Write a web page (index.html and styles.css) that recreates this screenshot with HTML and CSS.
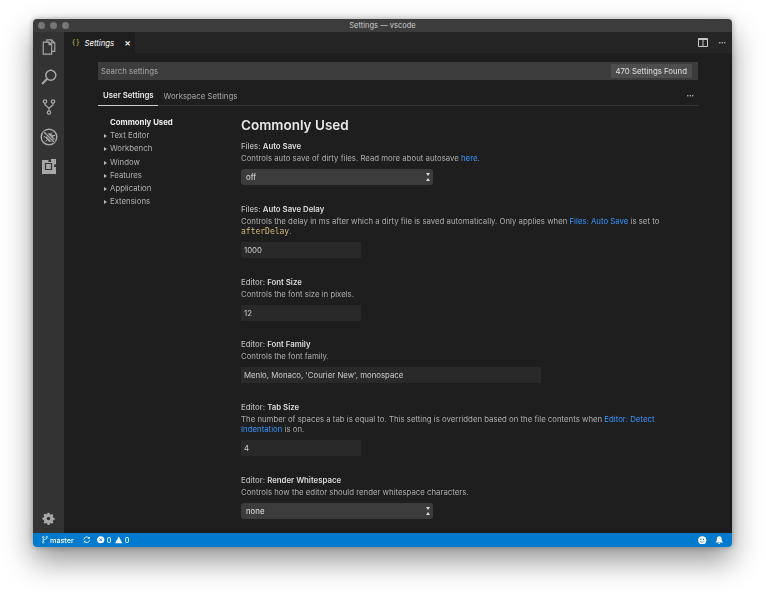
FILE: index.html
```html
<!DOCTYPE html>
<html lang="en">
<head>
    <meta charset="UTF-8" />
    <title>Settings — vscode</title>
    <link rel="stylesheet" href="styles.css">
</head>
<body>
<div class="window">
    <div class="titlebar">
        <div class="lights"><span></span><span></span><span></span></div>
        <div class="title">Settings — vscode</div>
    </div>
    <div class="workbench">
        <nav class="activity">
            <svg class="act" viewBox="0 0 16 18"><path d="M5.500 3.500V1h5.500l3.500 3.500V14h-3.500M1.500 3.500H8l3 3V17H1.500zM8 3.500v3h3M11 1v3.500h3.500" fill="none" stroke="#a8a8a8" stroke-width="1.300"/></svg>
            <svg class="act" viewBox="0 0 16 16"><circle cx="9.800" cy="6.200" r="5" fill="none" stroke="#a8a8a8" stroke-width="1.500"/><path d="M6.200 9.800L1 15" stroke="#a8a8a8" stroke-width="2"/></svg>
            <svg class="act" viewBox="0 0 16 18"><g fill="none" stroke="#a8a8a8" stroke-width="1.400"><circle cx="3.500" cy="2.800" r="1.900"/><circle cx="12.500" cy="2.800" r="1.900"/><circle cx="8" cy="15.200" r="1.900"/><path d="M3.500 4.800v1.700L8 10.500v2.800M12.500 4.800v1.700L8 10.500"/></g></svg>
            <svg class="act act-debug" viewBox="0 0 18 18"><circle cx="9" cy="9" r="7.800" fill="none" stroke="#a8a8a8" stroke-width="1.500"/><path d="M7 6.500a2.600 2 0 0 1 4.400-.5l2 2v4.500l-1.500 1.200H9L5 9.500z" fill="#a8a8a8"/><path d="M3.500 3.500l11 11" stroke="#333" stroke-width="2.800"/><path d="M3.500 3.500l11 11" stroke="#a8a8a8" stroke-width="1.300"/><path d="M12 4.500l-1.500 1.500M15 7.500h-2.500M15 11h-2.500M5 8.500l-1.500.5M7 12l-1.500 1.500" stroke="#a8a8a8"/></svg>
            <svg class="act act-ext" viewBox="0 0 14 15"><path d="M0 1h6.500v2H9V0h5v5.500h-2V8h2v7H0z" fill="#a8a8a8"/><path d="M3.500 4.500h6v6h-6z" fill="none" stroke="#333" stroke-width="1.200"/><path d="M5 6h3v3H5z" fill="#a8a8a8"/></svg>
            <svg class="act gear" viewBox="0 0 16 16"><path d="M6.800 1h2.400l.4 1.900 1.200.5 1.600-1 1.700 1.700-1 1.600.5 1.200 1.900.4v2.400l-1.900.4-.5 1.200 1 1.600-1.700 1.700-1.600-1-1.200.5-.4 1.900H6.800l-.4-1.900-1.200-.5-1.600 1-1.700-1.700 1-1.600-.5-1.200L.5 9.200V6.800l1.900-.4.500-1.200-1-1.600 1.700-1.700 1.600 1 1.200-.5zM8 5.800a2.200 2.200 0 1 0 0 4.400 2.200 2.200 0 0 0 0-4.400z" fill="#a8a8a8" fill-rule="evenodd"/></svg>
        </nav>
        <main class="editor">
            <div class="tabstrip">
                <div class="tab">
                    <span class="tab-icon">{}</span>
                    <span class="tab-name">Settings</span>
                    <span class="tab-close">×</span>
                </div>
                <div class="tab-actions">
                    <svg class="split" viewBox="0 0 10 9"><path d="M.5.500h9v8h-9zM5 .5v8M.5 1.500h9" fill="none" stroke="#c8c8c8"/></svg>
                    <span class="dots">•••</span>
                </div>
            </div>
            <div class="settings">
                <div class="searchbox">
                    <input class="search" type="text" placeholder="Search settings">
                    <span class="count">470 Settings Found</span>
                </div>
                <div class="targets">
                    <span class="target active">User Settings</span>
                    <span class="target">Workspace Settings</span>
                    <span class="dots targets-more">•••</span>
                </div>
                <div class="body">
                    <ul class="toc">
                        <li class="toc-current">Commonly Used</li>
                        <li>Text Editor</li>
                        <li>Workbench</li>
                        <li>Window</li>
                        <li>Features</li>
                        <li>Application</li>
                        <li>Extensions</li>
                    </ul>
                    <div class="list">
                        <h2>Commonly Used</h2>
                        <section class="item">
                            <div class="label">Files: <b>Auto Save</b></div>
                            <p>Controls auto save of dirty files. Read more about autosave <a>here</a>.</p>
                            <div class="select-wrap"><select><option>off</option></select></div>
                        </section>
                        <section class="item">
                            <div class="label">Files: <b>Auto Save Delay</b></div>
                            <p>Controls the delay in ms after which a dirty file is saved automatically. Only applies when <a>Files: Auto Save</a> is set to <code>afterDelay</code>.</p>
                            <input class="field" type="text" value="1000">
                        </section>
                        <section class="item">
                            <div class="label">Editor: <b>Font Size</b></div>
                            <p>Controls the font size in pixels.</p>
                            <input class="field" type="text" value="12">
                        </section>
                        <section class="item">
                            <div class="label">Editor: <b>Font Family</b></div>
                            <p>Controls the font family.</p>
                            <input class="field wide" type="text" value="Menlo, Monaco, 'Courier New', monospace">
                        </section>
                        <section class="item">
                            <div class="label">Editor: <b>Tab Size</b></div>
                            <p>The number of spaces a tab is equal to. This setting is overridden based on the file contents when <a>Editor: Detect Indentation</a> is on.</p>
                            <input class="field" type="text" value="4">
                        </section>
                        <section class="item">
                            <div class="label">Editor: <b>Render Whitespace</b></div>
                            <p>Controls how the editor should render whitespace characters.</p>
                            <div class="select-wrap"><select><option>none</option></select></div>
                        </section>
                    </div>
                </div>
            </div>
        </main>
    </div>
    <footer class="statusbar">
        <span class="st st-branch">
            <svg class="st-icon st-git" viewBox="0 0 8 10"><g fill="none" stroke="#fff" stroke-width=".9"><circle cx="1.600" cy="1.600" r="1.100"/><circle cx="1.600" cy="8.400" r="1.100"/><circle cx="6.400" cy="1.600" r="1.100"/><path d="M1.600 2.700v4.600M6.400 2.700c0 2-4.800 1.500-4.800 3.500"/></g></svg>
            master
        </span>
        <svg class="st-icon st-sync" viewBox="0 0 10 10"><path d="M1.200 4.500a3.800 3.800 0 0 1 6.600-2M8.800 5.500a3.800 3.800 0 0 1-6.600 2" fill="none" stroke="#fff" stroke-width="1.100"/><path d="M9 .8v3H6zM1 9.200v-3h3z" fill="#fff"/></svg>
        <span class="st">
            <svg class="st-icon" viewBox="0 0 10 10"><circle cx="5" cy="5" r="4.800" fill="#fff"/><path d="M3.200 3.200l3.600 3.600M6.800 3.200L3.200 6.800" stroke="#007acc" stroke-width="1.200"/></svg>
            0
            <svg class="st-icon st-warn" viewBox="0 0 10 10"><path d="M5 .5l4.800 9H.2z" fill="#fff"/></svg>
            0
        </span>
        <span class="st-right">
            <svg class="st-icon st-big" viewBox="0 0 10 10"><circle cx="5" cy="5" r="4.800" fill="#fff"/><circle cx="3.400" cy="3.800" r=".8" fill="#007acc"/><circle cx="6.600" cy="3.800" r=".8" fill="#007acc"/><path d="M2.600 6c.6 1.700 4.200 1.700 4.800 0" fill="none" stroke="#007acc" stroke-width=".8"/></svg>
            <svg class="st-icon st-big" viewBox="0 0 10 10"><path d="M5 .3c2 0 2.800 1.500 2.800 3.500 0 1.700.7 2.700 1.700 3.700H.5c1-1 1.700-2 1.700-3.700C2.200 1.800 3 .3 5 .3zM3.800 8.300h2.400C6 9.700 4 9.700 3.800 8.300z" fill="#fff"/></svg>
        </span>
    </footer>
</div>
</body>
</html>
```

FILE: styles.css
```css
* { margin: 0; padding: 0; box-sizing: border-box; }
html, body { height: 100%; overflow: hidden; }
body {
    background: #fff;
    padding: 19px 34px 48px 33px;
    font-family: Inter, "Liberation Sans", sans-serif;
    font-size: 7.8px;
    color: #bbb;
}
/* the reference is a scaled down screenshot, so everything is a bit soft */
.window {
    display: flex;
    flex-direction: column;
    height: 528px;
    border-radius: 4px;
    overflow: hidden;
    box-shadow: 0 14px 30px rgba(0, 0, 0, 0.42), 0 0 6px rgba(0, 0, 0, 0.3);
    filter: blur(0.3px);
}
.titlebar {
    display: flex;
    align-items: center;
    justify-content: center;
    position: relative;
    height: 13px;
    flex: none;
    background: #3c3c3c;
}
.lights {
    position: absolute;
    left: 5px;
    top: 3px;
    display: flex;
    gap: 5px;
}
.lights span {
    width: 7px;
    height: 7px;
    border-radius: 50%;
    background: #757575;
}
.title { font-size: 7.5px; color: #ccc; }
.workbench { display: flex; flex: 1; min-height: 0; }
.activity {
    display: flex;
    flex-direction: column;
    align-items: center;
    gap: 14px;
    width: 31px;
    flex: none;
    padding: 7px 0 8px;
    background: #333;
}
.act { width: 16px; height: 16px; flex: none; }
.act-debug { width: 18px; height: 18px; margin: -1px 0; }
.act-ext { width: 14px; height: 15px; margin-top: 0; }
.gear { width: 13px; height: 13px; margin-top: auto; }
.editor {
    flex: 1;
    min-width: 0;
    display: flex;
    flex-direction: column;
    background: #1e1e1e;
}
.tabstrip {
    display: flex;
    align-items: stretch;
    justify-content: space-between;
    height: 21px;
    flex: none;
    background: #252526;
}
.tab {
    display: flex;
    align-items: center;
    width: 71px;
    padding-left: 8px;
    background: #1e1e1e;
    color: #fff;
}
.tab-icon { color: #cbcb41; font-size: 7.5px; letter-spacing: 1px; margin-right: 4px; }
.tab-name { font-style: italic; }
.tab-close { margin-left: 10px; padding-bottom: 2px; font-size: 10px; font-weight: 500; line-height: 1; }
.tab-actions {
    display: flex;
    align-items: center;
    gap: 10px;
    padding-right: 6px;
}
.split { width: 10px; height: 9px; }
.dots { font-size: 4.500px; letter-spacing: 0; color: #ccc; }
.settings {
    flex: 1;
    min-height: 0;
    overflow: hidden;
    padding: 9px 34px 0;
}
.searchbox {
    display: flex;
    align-items: center;
    height: 18px;
    padding-right: 6px;
    background: #3c3c3c;
}
.search {
    flex: 1;
    min-width: 0;
    padding-left: 3px;
    border: none;
    outline: none;
    background: transparent;
    font: inherit;
    color: #ccc;
}
.search::placeholder { color: #a6a6a6; opacity: 1; }
.count {
    padding: 2px 5px;
    background: #4d4d4d;
    color: #e0e0e0;
}
.targets {
    display: flex;
    align-items: stretch;
    height: 26px;
    border-bottom: 1px solid #3a3a3a;
}
.target {
    display: flex;
    align-items: center;
    padding: 5px 5px 0 6px;
    margin-bottom: -1px;
    color: #a8a8a8;
}
.target.active {
    padding: 5px 4px 0 5px;
    color: #e7e7e7;
    font-weight: 600;
    border-bottom: 1px solid #ccc;
}
.targets-more { margin-left: auto; align-self: center; padding: 5px 4px 0 0; }
.body { display: flex; }
.toc {
    list-style: none;
    width: 143px;
    flex: none;
    padding: 10px 0 0 12px;
}
.toc li {
    position: relative;
    height: 13.2px;
    line-height: 13.2px;
    color: #b0b0b0;
}
.toc li:not(.toc-current)::before {
    content: "";
    position: absolute;
    left: -6px;
    top: 5px;
    border-left: 3px solid #bbb;
    border-top: 2px solid transparent;
    border-bottom: 2px solid transparent;
}
.toc .toc-current { color: #eee; font-weight: 700; }
.list { flex: 1; min-width: 0; padding-top: 9px; }
h2 {
    font-size: 13.500px;
    line-height: 20px;
    font-weight: 600;
    color: #e8e8e8;
    margin-bottom: 5px;
}
.item { margin-bottom: 17.600px; }
.label { height: 12px; line-height: 12px; color: #b8b8b8; font-weight: 500; }
.label b { font-weight: 600; color: #dcdcdc; }
p { line-height: 10.500px; margin-top: 1px; color: #adadad; max-width: 448px; }
a { color: #3794ff; }
code { font-family: "DejaVu Sans Mono", monospace; font-size: 8px; line-height: 1; color: #d7ba7d; }
.select-wrap { position: relative; width: 192px; height: 16px; margin-top: 5.500px; }
.select-wrap::after {
    content: "";
    position: absolute;
    right: 3px;
    top: 4px;
    width: 0;
    height: 2px;
    border-left: 2px solid transparent;
    border-right: 2px solid transparent;
    border-top: 3px solid #ddd;
    border-bottom: 3px solid #ddd;
}
select {
    appearance: none;
    display: block;
    width: 100%;
    height: 100%;
    padding-left: 5px;
    border: none;
    border-radius: 3px;
    background: #3c3c3c;
    font: inherit;
    color: #e0e0e0;
}
.field {
    display: block;
    width: 120px;
    height: 16px;
    margin-top: 5.500px;
    padding-left: 3px;
    border: none;
    outline: none;
    background: #292929;
    font: inherit;
    color: #ccc;
}
.field.wide { width: 300px; }
.statusbar {
    display: flex;
    align-items: center;
    height: 14px;
    flex: none;
    padding: 0 9px 0 9px;
    background: #007acc;
    color: #fff;
    font-size: 7.200px;
    font-weight: 500;
}
.st { display: flex; align-items: center; gap: 2px; }
.st-branch { margin-right: 9px; }
.st-sync { margin-right: 7px; }
.st-icon { width: 7.500px; height: 7.500px; flex: none; }
.st-git { width: 6px; }
.st-big { width: 8.500px; height: 8.500px; }
.st-warn { margin-left: 2px; }
.st-right { display: flex; gap: 8px; margin-left: auto; }
```
